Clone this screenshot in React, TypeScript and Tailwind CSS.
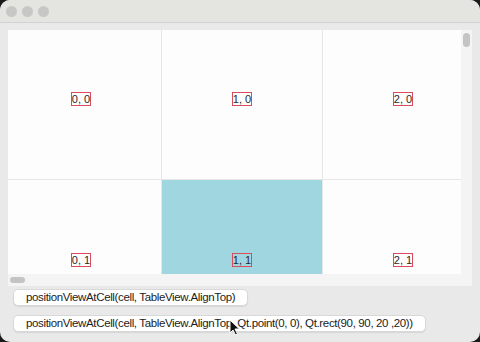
import React from "react";

const COLS = 3;
const ROWS = 2;

function Label({ text }: { text: string }) {
  return (
    <span className="border border-[#dc4b5a] px-0 text-[11px] leading-[12px] text-[#2a2a2a]">
      {text}
    </span>
  );
}

function Cell({ col, row }: { col: number; row: number }) {
  const active = col === 1 && row === 1;
  return (
    <div
      className={
        "flex h-[160px] w-[160px] items-center justify-center " +
        (active ? "bg-[#9fd6e0]" : "bg-[#fdfdfd]")
      }
    >
      <Label text={`${col}, ${row}`} />
    </div>
  );
}

function Cursor() {
  return (
    <svg
      className="absolute left-[229px] top-[319px]"
      width="12"
      height="17"
      viewBox="0 0 12 17"
    >
      <path
        d="M1 1 L1 14 L4 11 L6.5 16 L8.5 15 L6 10 L10.5 10 Z"
        fill="#111"
        stroke="#fff"
        strokeWidth="1"
      />
    </svg>
  );
}

function Button({ text }: { text: string }) {
  return (
    <button className="self-start rounded-[5px] border border-[#d8d8d8] bg-white px-[12px] text-left text-[11.5px] leading-[15px] tracking-[-0.36px] text-[#1c1c1c] shadow-[0_1px_1px_rgba(0,0,0,0.08)]">
      {text}
    </button>
  );
}

export default function App() {
  const cells = [];
  for (let r = 0; r < ROWS; r++)
    for (let c = 0; c < COLS; c++) cells.push(<Cell key={`${c}-${r}`} col={c} row={r} />);

  return (
    <div className="relative h-[342px] w-[480px] bg-[#1a1a1a] font-['Liberation_Sans',Arial,sans-serif]">
      <div className="flex h-full w-full flex-col overflow-hidden rounded-[10px] bg-[#e9e9e9]">
        {/* title bar */}
        <div className="flex h-[23px] items-center gap-[5px] border-b border-[#d2d2d0] bg-[#e4e4e1] pl-[6px]">
          <span className="h-[11px] w-[11px] rounded-full bg-[#c7c7c5]" />
          <span className="h-[11px] w-[11px] rounded-full bg-[#c7c7c5]" />
          <span className="h-[11px] w-[11px] rounded-full bg-[#c7c7c5]" />
        </div>

        {/* table view */}
        <div className="ml-[8px] mt-[7px] grid h-[256px] w-[464px] grid-cols-[453px_11px] grid-rows-[244px_12px] bg-[#f4f4f4]">
          <div className="overflow-hidden bg-[#fdfdfd]">
            <div className="-ml-[7px] -mt-[11px] grid w-max grid-cols-[160px_160px_160px] gap-[1px] bg-[#e6e6e6]">
              {cells}
            </div>
          </div>
          <div className="flex justify-center pt-[3px]">
            <div className="h-[14px] w-[7px] rounded-full bg-[#c4c4c4]" />
          </div>
          <div className="flex items-center pl-[2px]">
            <div className="h-[6px] w-[15px] rounded-full bg-[#c4c4c4]" />
          </div>
          <div />
        </div>

        {/* buttons */}
        <div className="ml-[13px] mt-[3px] flex flex-col gap-[9px]">
          <Button text="positionViewAtCell(cell, TableView.AlignTop)" />
          <Button text="positionViewAtCell(cell, TableView.AlignTop, Qt.point(0, 0), Qt.rect(90, 90, 20 ,20))" />
        </div>
      </div>
      <Cursor />
    </div>
  );
}
